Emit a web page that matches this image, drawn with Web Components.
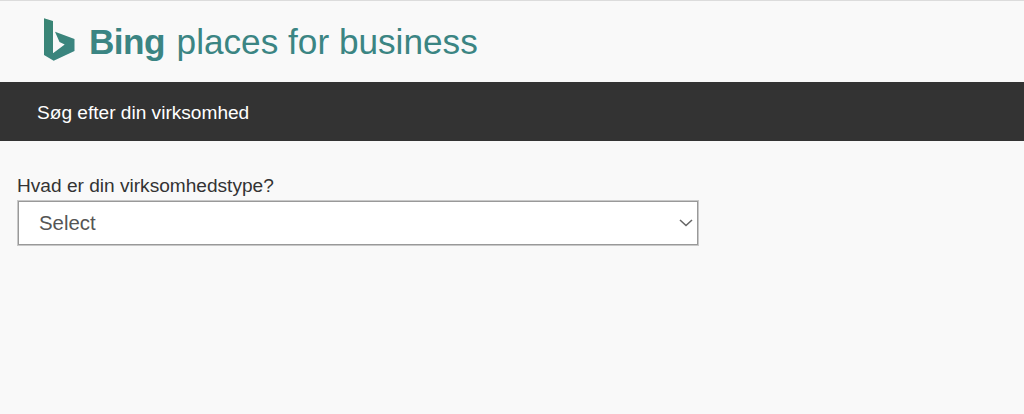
<!DOCTYPE html>
<html>
<head>
<meta charset="utf-8">
<title>Bing places for business</title>
<style>
  html, body {
    margin: 0;
    height: 100%;
    background: #f9f9f9;
    font-family: "Liberation Sans", Arial, sans-serif;
  }
  body { overflow: hidden; }
</style>
</head>
<body>
<bp-header></bp-header>
<bp-titlebar>Søg efter din virksomhed</bp-titlebar>
<bp-form>
  <bp-select label="Hvad er din virksomhedstype?" value="Select"></bp-select>
</bp-form>

<script>
class BpHeader extends HTMLElement {
  constructor() {
    super()
    this.attachShadow({ mode: 'open' })
    this.shadowRoot.innerHTML = `
      <style>
        :host {
          display: flex;
          box-sizing: border-box;
          height: 82px;
          padding: 17px 0 0 44px;
          gap: 14px;
          border-top: 1px solid #dcdcdc;
          color: #3b8583;
          font-size: 35.2px;
          line-height: 48px;
        }
        svg { display: block; }
        b { font-weight: 700; letter-spacing: -0.6px; margin-right: 2px; }
      </style>
      <svg width="31" height="43" viewBox="0 0 31 43">
        <defs>
          <linearGradient id="g" x1="0" y1="0" x2="1" y2="1">
            <stop offset="0" stop-color="#3a8573"/>
            <stop offset="1" stop-color="#3b8583"/>
          </linearGradient>
        </defs>
        <path fill="url(#g)" d="M0 0.3 L9 3 V35.3 L20.7 26.5 L15.5 24 L11 13.7 L30.5 21 V33 L9.7 42.7 L0 37 Z"/>
      </svg>
      <div><b>Bing</b> places for business</div>
    `
  }
}

class BpTitlebar extends HTMLElement {
  constructor() {
    super()
    this.attachShadow({ mode: 'open' })
    this.shadowRoot.innerHTML = `
      <style>
        :host {
          display: flex;
          align-items: center;
          box-sizing: border-box;
          height: 59px;
          padding: 3px 0 0 37px;
          background: #333;
          color: #fff;
          font-size: 19.1px;
        }
      </style>
      <slot></slot>
    `
  }
}

class BpForm extends HTMLElement {
  constructor() {
    super()
    this.attachShadow({ mode: 'open' })
    this.shadowRoot.innerHTML = `
      <style>
        :host {
          display: block;
          padding: 33px 0 0 17px;
        }
      </style>
      <slot></slot>
    `
  }
}

class BpSelect extends HTMLElement {
  constructor() {
    super()
    this.attachShadow({ mode: 'open' })
    this.shadowRoot.innerHTML = `
      <style>
        :host {
          display: block;
          width: 682px;
        }
        label {
          display: block;
          margin-bottom: 3px;
          color: #333;
          font-size: 19.1px;
          line-height: 23px;
        }
        .box {
          display: flex;
          align-items: center;
          justify-content: space-between;
          box-sizing: border-box;
          height: 46px;
          padding: 0 5px 0 21px;
          background: #fff;
          border: 1px solid #c8c8c8;
          box-shadow: inset 0 0 0 1px #999;
          color: #555;
          font-size: 20.4px;
        }
        svg { display: block; }
      </style>
      <label></label>
      <div class="box">
        <span class="value"></span>
        <svg width="14" height="8" viewBox="0 0 14 8">
          <path d="M1 1 L7 6.5 L13 1" fill="none" stroke="#666" stroke-width="1.6"/>
        </svg>
      </div>
    `
  }

  connectedCallback() {
    this.shadowRoot.querySelector('label').textContent = this.getAttribute('label')
    this.shadowRoot.querySelector('.value').textContent = this.getAttribute('value')
  }
}

customElements.define('bp-header', BpHeader)
customElements.define('bp-titlebar', BpTitlebar)
customElements.define('bp-form', BpForm)
customElements.define('bp-select', BpSelect)
</script>
</body>
</html>
